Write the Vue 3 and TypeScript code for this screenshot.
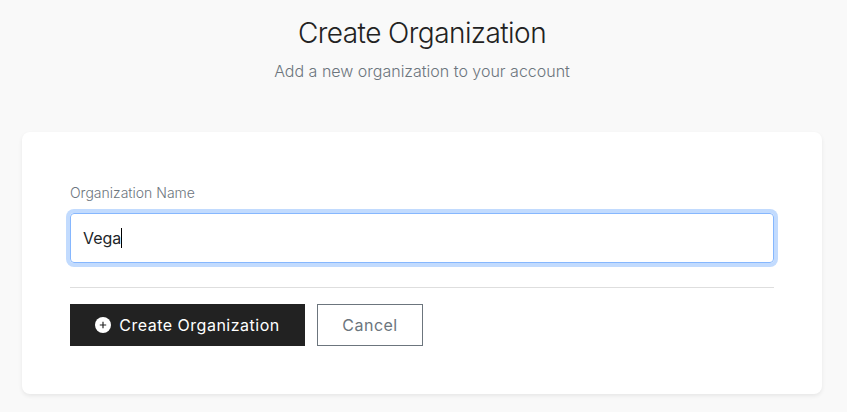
<script setup lang="ts">
import { ref } from 'vue'

const name = ref<string>('Vega')
</script>

<template>
  <main class="page">
    <header class="heading">
      <h1>Create Organization</h1>
      <p>Add a new organization to your account</p>
    </header>
    <form class="card" @submit.prevent>
      <label for="org-name">Organization Name</label>
      <div id="org-name" class="field" role="textbox"><span>{{ name }}</span><i class="caret"></i></div>
      <hr />
      <div class="actions">
        <button class="btn primary" type="submit">
          <svg viewBox="0 0 16 16" width="16" height="16" aria-hidden="true">
            <circle cx="8" cy="8" r="8" fill="#fff" />
            <path d="M8 4.8v6.4M4.8 8h6.4" stroke="#222" stroke-width="1.15" />
          </svg>
          <span>Create Organization</span>
        </button>
        <button class="btn secondary" type="button">Cancel</button>
      </div>
    </form>
  </main>
</template>

<style>
body {
  background: #f9f9f9;
}
</style>

<style scoped>
.page {
  box-sizing: border-box;
  height: 412px;
  padding: 15px 25px 0 22px;
  overflow: hidden;
  font-family: Inter, sans-serif;
  font-size: 16px;
  color: #212529;
}
.heading {
  text-align: center;
}
h1 {
  margin: 0 0 8px;
  font-size: 28px;
  line-height: 36px;
  font-weight: 300;
  letter-spacing: -0.56px;
  color: #222;
}
p {
  margin: 0;
  line-height: 24px;
  font-weight: 300;
  color: #6c757d;
}
.card {
  box-sizing: border-box;
  height: 262px;
  margin-top: 49px;
  padding: 50px 48px 0;
  background: #fff;
  border-radius: 8px;
  box-shadow: 0 2px 4px rgba(0, 0, 0, 0.075);
}
label {
  display: block;
  margin-bottom: 9px;
  font-size: 14px;
  line-height: 22px;
  font-weight: 300;
  color: #6c757d;
}
.field {
  box-sizing: border-box;
  display: flex;
  align-items: center;
  height: 50px;
  padding: 0 12px;
  border: 1px solid #86b7fe;
  border-radius: 4px;
  box-shadow: 0 0 0 4px #c2dbfe;
}
.caret {
  width: 1px;
  height: 20px;
  background: #000;
}
hr {
  height: 1px;
  margin: 24px 0 16px;
  border: 0;
  background: #dedede;
}
.actions {
  display: flex;
  gap: 12px;
}
.btn {
  box-sizing: border-box;
  display: flex;
  align-items: center;
  justify-content: center;
  gap: 8px;
  height: 42px;
  padding: 0;
  border: 1px solid #222;
  font: 400 16px/24px Inter, sans-serif;
  letter-spacing: 0.5px;
}
.primary {
  width: 235px;
  background: #222;
  color: #fff;
}
.secondary {
  width: 106px;
  border-color: #6c757d;
  background: #fff;
  color: #6c757d;
}
</style>
